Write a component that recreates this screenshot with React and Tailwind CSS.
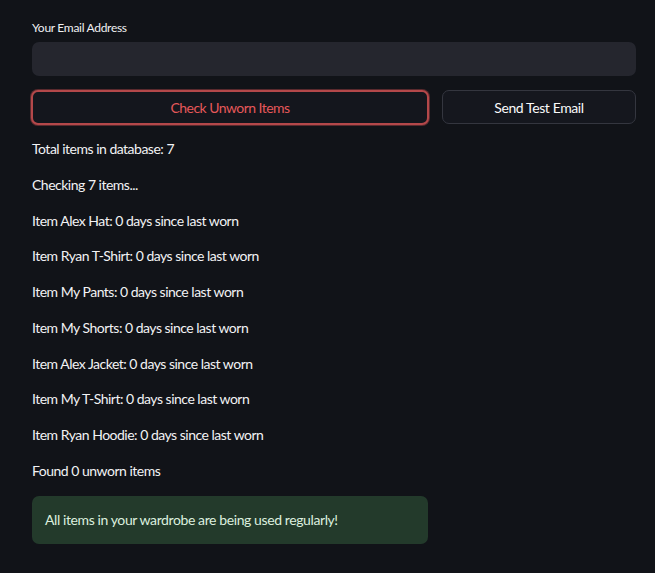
import React from "react";

const items = [
  "Item Alex Hat: 0 days since last worn",
  "Item Ryan T-Shirt: 0 days since last worn",
  "Item My Pants: 0 days since last worn",
  "Item My Shorts: 0 days since last worn",
  "Item Alex Jacket: 0 days since last worn",
  "Item My T-Shirt: 0 days since last worn",
  "Item Ryan Hoodie: 0 days since last worn",
];

export default function App() {
  const lines = [
    "Total items in database: 7",
    "Checking 7 items...",
    ...items,
    "Found 0 unworn items",
  ];
  return (
    <div
      className="min-h-[573px] w-full bg-[#111318] text-[#fafafa] antialiased tracking-[-0.5px]"
      style={{ fontFamily: 'Lato, "Liberation Sans", sans-serif' }}
    >
      <div className="pl-[32px] pr-[19px] pt-[20px]">
        <div className="text-[12px] leading-[16px] tracking-[-0.3px] text-[#f0f0f2]">Your Email Address</div>
        <div className="mt-[6px] h-[34px] w-full rounded-[7px] bg-[#25262e]" />
        <div className="mt-[14px] flex gap-[13px]">
          <button className="flex h-[35px] w-[398px] -ml-[1px] items-center justify-center rounded-[7px] border-2 border-[#b4484a] bg-[#14161d] text-[14px] tracking-[-0.55px] text-[#e5585a] shadow-[0_0_0_1px_#5a2a2e]">
            Check Unworn Items
          </button>
          <button className="flex h-[34px] flex-1 items-center justify-center rounded-[7px] border border-[#34363f] bg-[#15171e] text-[14px] tracking-[-0.4px] text-[#fafafa]">
            Send Test Email
          </button>
        </div>
        <div className="mt-[13px] flex flex-col">
          {lines.map((l, i) => (
            <div key={i} className="h-[35.75px] text-[14px] leading-[22px] text-[#f2f2f4]">
              {l}
            </div>
          ))}
        </div>
        <div className="flex h-[48px] w-[396px] items-center rounded-[7px] bg-[#233a2b] px-[13px] text-[14px] tracking-[-0.4px] text-[#dcefdf]">
          All items in your wardrobe are being used regularly!
        </div>
      </div>
    </div>
  );
}
